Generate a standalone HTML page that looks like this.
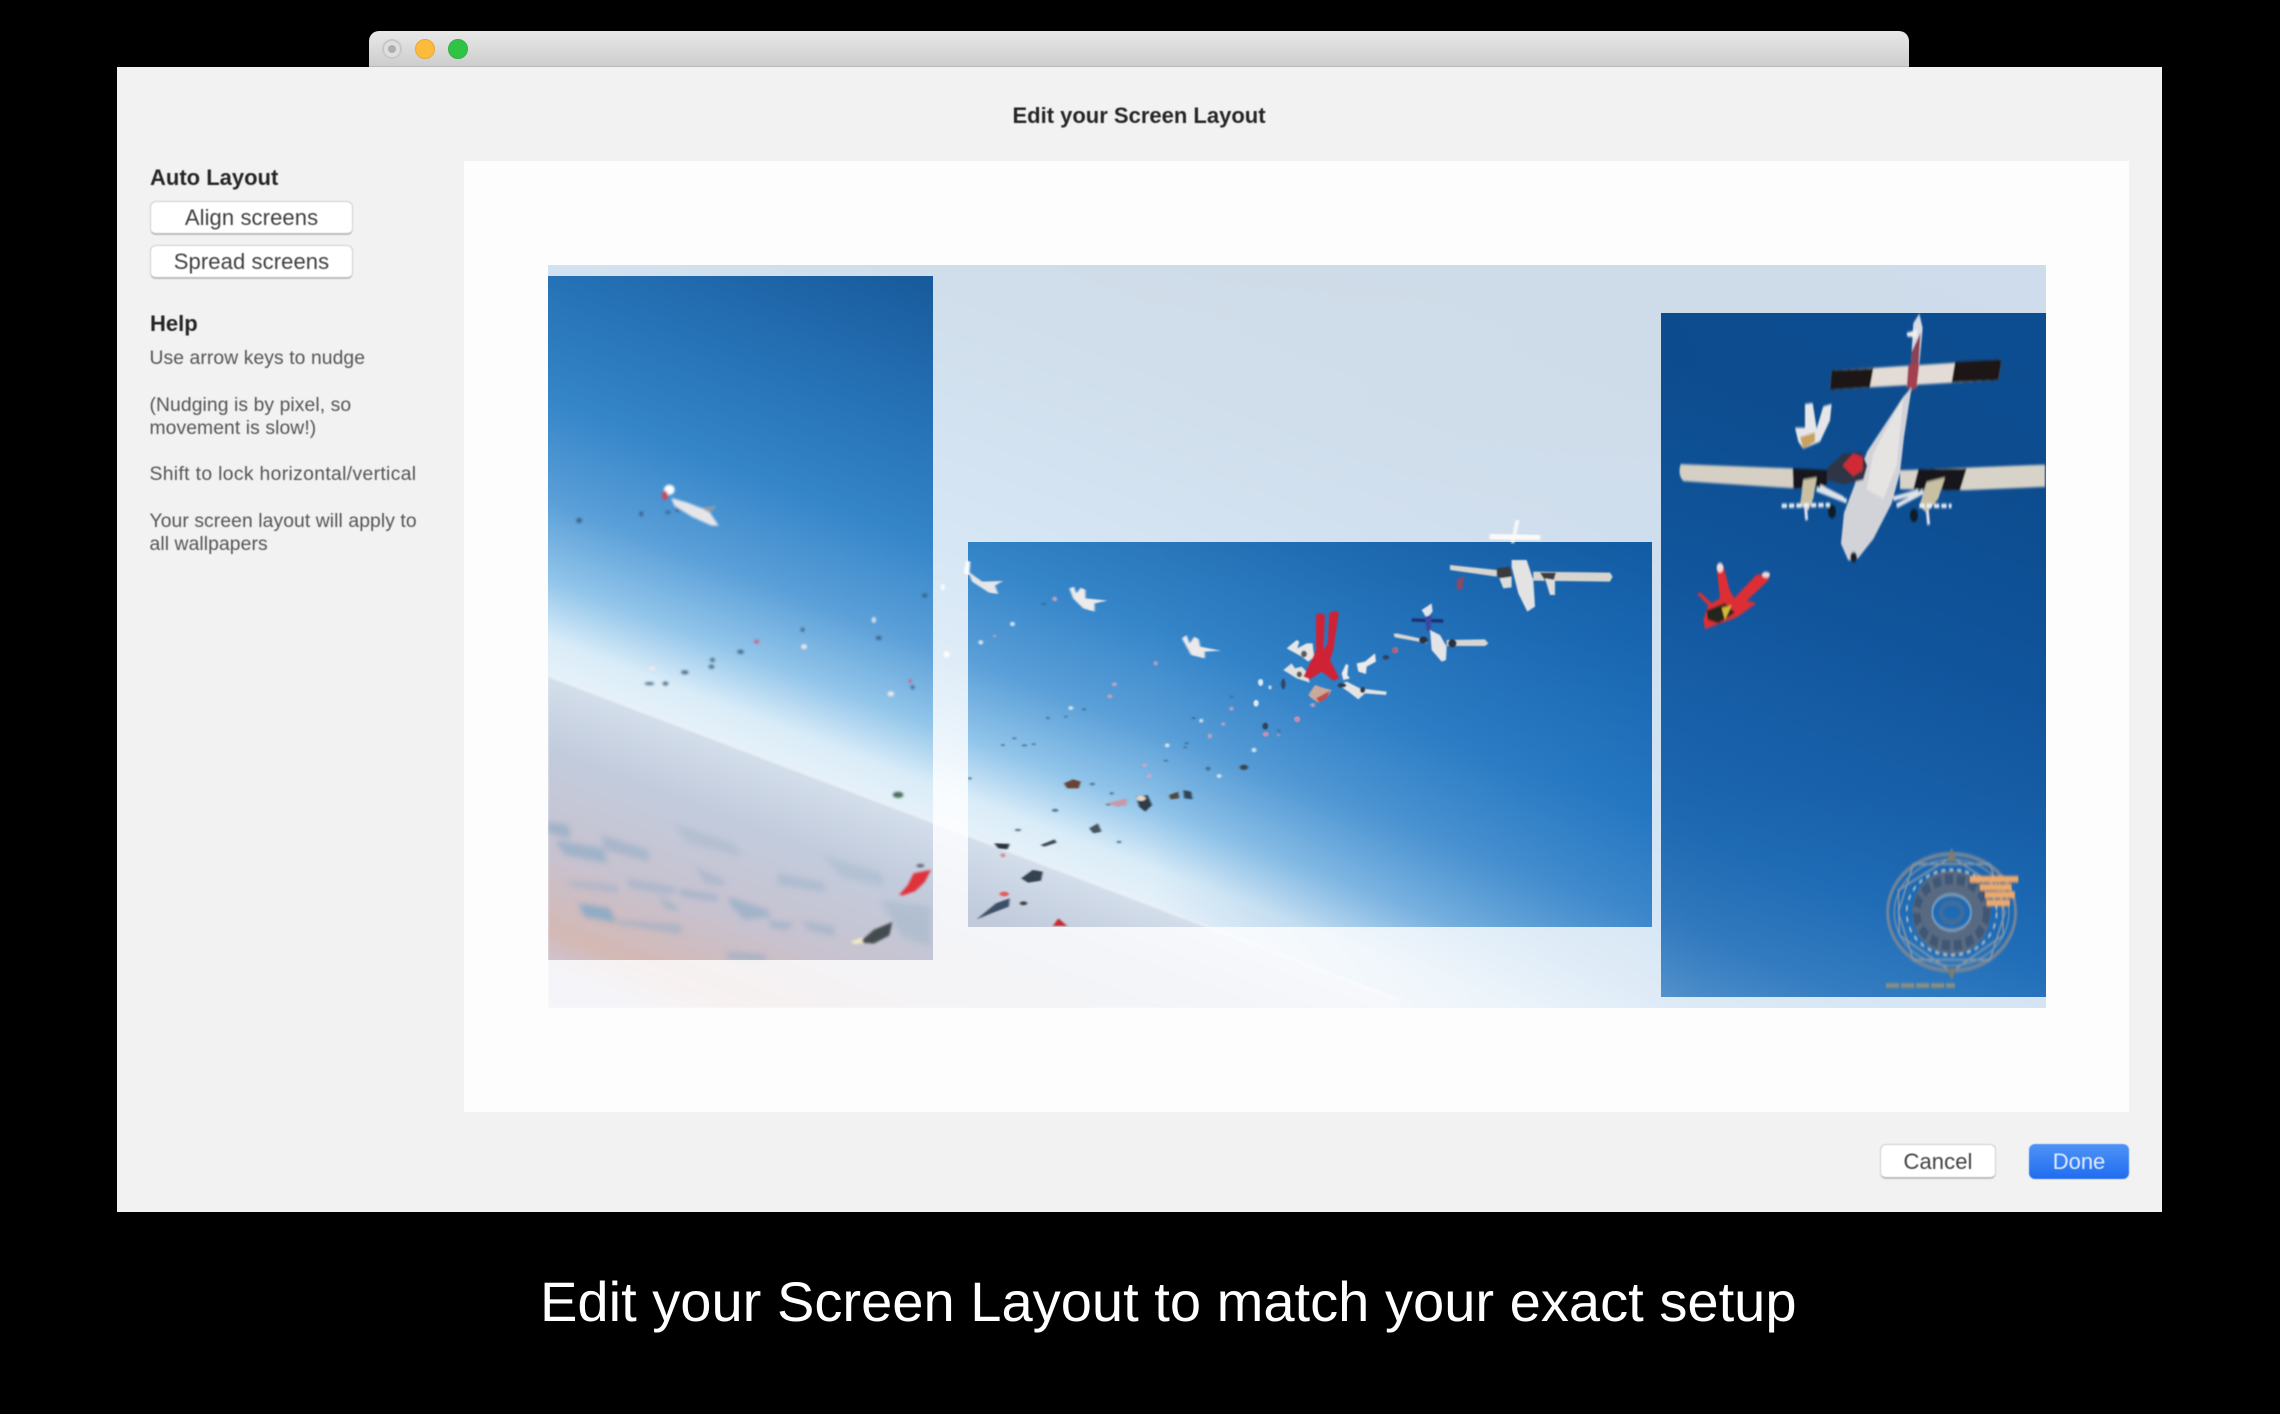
<!DOCTYPE html>
<html lang="en"><head><meta charset="utf-8"><title>Edit your Screen Layout</title>
<style>
html,body{margin:0;padding:0;background:#000;width:2280px;height:1414px;overflow:hidden}
body{position:relative;font-family:"Liberation Sans",Arial,sans-serif}
.a{position:absolute;white-space:nowrap}
.bar{left:369px;top:31px;width:1540px;height:37px;border-radius:10px 10px 0 0;background:linear-gradient(#e9e9e9,#cdcdcd);box-sizing:border-box;border-bottom:2px solid #b9b9b9}
.tl{width:20px;height:20px;border-radius:50%;top:39px;box-sizing:border-box}
.sheet{left:117px;top:67px;width:2045px;height:1145px;background:#f2f2f2}
.panel{left:464px;top:161px;width:1665px;height:951px;background:#fdfdfd}
.t{filter:blur(.45px)}
.b{font-weight:bold;color:#262626}
.h{font-size:19.3px;color:#555;left:149.5px;line-height:23px;letter-spacing:.1px}
.btn{box-sizing:border-box;height:34px;background:#fff;border:1px solid #cfcfcf;border-bottom:2px solid #bdbdbd;border-radius:6px;text-align:center;font-size:22px;line-height:32px;color:#404040;letter-spacing:.1px}
</style></head><body>
<div class="a bar"></div>
<div class="a tl" style="left:382px;background:#dedede;border:2px solid #c8c8c8"></div>
<div class="a" style="left:388px;top:45px;width:8px;height:8px;border-radius:50%;background:#aeaeae"></div>
<div class="a tl" style="left:415px;background:#fdbb3c;border:1px solid #e6a83a"></div>
<div class="a tl" style="left:448px;background:#2fc445;border:1px solid #35b04a"></div>

<div class="a sheet"></div>
<div class="a panel"></div>

<svg class="a" style="left:0;top:0;overflow:hidden" width="2280" height="1414" viewBox="0 0 2280 1414">
<defs>
<linearGradient id="sky" gradientUnits="userSpaceOnUse" x1="548" y1="676" x2="903" y2="-259">
<stop offset="0" stop-color="#e6f1f9"/>
<stop offset=".035" stop-color="#d9ecf8"/>
<stop offset=".09" stop-color="#92c5ea"/>
<stop offset=".165" stop-color="#5a9fd8"/>
<stop offset=".26" stop-color="#3585c9"/>
<stop offset=".37" stop-color="#2672b6"/>
<stop offset=".51" stop-color="#175a9b"/>
<stop offset=".7" stop-color="#0e477f"/>
<stop offset="1" stop-color="#0f4c8a"/>
</linearGradient>
<linearGradient id="ov" gradientUnits="userSpaceOnUse" x1="1150" y1="0" x2="1700" y2="0">
<stop offset="0" stop-color="#0b5fb5" stop-opacity="0"/>
<stop offset="1" stop-color="#0b5fb5" stop-opacity=".42"/>
</linearGradient>
<linearGradient id="ground" gradientUnits="userSpaceOnUse" x1="720" y1="735" x2="620" y2="1000">
<stop offset="0" stop-color="#d5e0ec"/>
<stop offset=".25" stop-color="#c2ccdd"/>
<stop offset=".6" stop-color="#c8c2cf"/>
<stop offset=".86" stop-color="#d4b8b4"/>
<stop offset="1" stop-color="#ccc8dc"/>
</linearGradient>
<linearGradient id="rdark" x1="0" y1="0" x2="0" y2="1">
<stop offset="0" stop-color="#0a2f66" stop-opacity=".15"/>
<stop offset=".7" stop-color="#0a3a7a" stop-opacity=".22"/>
<stop offset="1" stop-color="#0a3a7a" stop-opacity=".1"/>
</linearGradient>
<filter id="bl" x="-5%" y="-5%" width="110%" height="110%"><feGaussianBlur stdDeviation="2.6"/></filter>
<filter id="bl0" x="-5%" y="-5%" width="110%" height="110%"><feGaussianBlur stdDeviation="1"/></filter>
<filter id="bl2" x="-5%" y="-5%" width="110%" height="110%"><feGaussianBlur stdDeviation="9"/></filter>
<clipPath id="wp"><rect x="548" y="265" width="1498" height="743"/></clipPath>
</defs>
<g clip-path="url(#wp)">
<rect x="548" y="265" width="1498" height="743" fill="url(#sky)"/>
<rect x="1100" y="265" width="946" height="743" fill="url(#ov)"/>
<rect x="1661" y="313" width="385" height="684" fill="url(#rdark)"/>
<!-- ground -->
<path d="M548 676L1400 1000L1400 1008H548z" fill="url(#ground)" filter="url(#bl0)"/>
<path d="M548 676L1400 1000" stroke="#eef4f9" stroke-width="2" fill="none" opacity=".7" filter="url(#bl0)"/>
<!-- fields, zoom 8 coordinates -->
<g transform="translate(548,760) scale(.333,.333)" filter="url(#bl2)" fill="#8fabc4">
<path d="M0 185L60 195L70 235L0 220z" opacity=".7"/>
<path d="M20 240L165 265L180 310L50 285z" opacity=".7"/>
<path d="M160 225L300 270L305 305L170 270z" opacity=".55"/>
<path d="M90 430L185 445L205 488L110 470z"/>
<path d="M200 480L400 495L400 522L220 495z" opacity=".55"/>
<path d="M235 355L380 380L380 405L245 385z" opacity=".45"/>
<path d="M390 385L510 405L510 425L400 410z" opacity=".55"/>
<path d="M540 410L660 450L670 470L590 480L550 440z" opacity=".65"/>
<path d="M660 480L740 490L720 510L670 505z" opacity=".55"/>
<path d="M330 405L390 440L385 455L350 445z" opacity=".5"/>
<path d="M440 320L530 360L530 380L470 370z" opacity=".4"/>
<path d="M540 575L650 585L660 605L540 600z" opacity=".6"/>
<path d="M690 340L830 370L830 395L690 375z" opacity=".4"/>
<path d="M760 480L860 500L860 530L780 510z" opacity=".45"/>
<path d="M830 290L1000 340L1010 380L880 350z" opacity=".3"/>
<path d="M1000 420L1150 440L1150 560L1060 530z" opacity=".35"/>
<path d="M380 190L560 250L580 290L420 250z" opacity=".3"/>
<path d="M60 360L210 375L210 400L70 380z" opacity=".4"/>
</g>

<!-- left screen objects : zoom 3 coordinates -->
<g transform="translate(520,240) scale(.4847,.5128)">
<g filter="url(#bl)">
<path d="M312 503L345 512L372 522L405 519L392 532L410 557L395 557L355 540L318 518z" fill="#e6e6ea"/>
<path d="M372 522L405 519L392 532z" fill="#8e99a5"/>
<ellipse cx="308" cy="487" rx="11" ry="10" fill="#fff"/>
<ellipse cx="299" cy="498" rx="6" ry="9" fill="#d9434f"/>
<g fill="#33506c" opacity=".75">
<ellipse cx="122" cy="547" rx="6" ry="5"/><ellipse cx="250" cy="534" rx="4" ry="5"/><ellipse cx="305" cy="531" rx="5" ry="3"/><ellipse cx="325" cy="527" rx="5" ry="3"/>
<ellipse cx="397" cy="819" rx="5" ry="4"/><ellipse cx="395" cy="832" rx="6" ry="4"/><ellipse cx="340" cy="843" rx="8" ry="4"/><ellipse cx="267" cy="865" rx="10" ry="3"/><ellipse cx="300" cy="865" rx="6" ry="4"/><ellipse cx="455" cy="803" rx="7" ry="4"/><ellipse cx="583" cy="760" rx="4" ry="4"/><ellipse cx="740" cy="776" rx="6" ry="4"/><ellipse cx="835" cy="693" rx="5" ry="4"/><ellipse cx="810" cy="872" rx="4" ry="4"/>
</g>
<g fill="#f0e9ea"><ellipse cx="730" cy="741" rx="4" ry="6"/><ellipse cx="586" cy="793" rx="6" ry="5"/><ellipse cx="273" cy="835" rx="7" ry="4"/><ellipse cx="765" cy="885" rx="7" ry="5"/></g>
<g fill="#d75d80"><ellipse cx="488" cy="783" rx="5" ry="4"/><ellipse cx="805" cy="860" rx="3" ry="4"/></g>
<ellipse cx="780" cy="1082" rx="11" ry="6" fill="#4c6f5c"/>
<path d="M782 1277L800 1258L812 1235L848 1228L835 1252L815 1270L790 1278z" fill="#e0333a"/>
<ellipse cx="826" cy="1220" rx="8" ry="3" fill="#556"/>
<path d="M700 1370L730 1345L768 1330L762 1356L730 1372z" fill="#434b4e"/>
<path d="M682 1368L705 1360L708 1372L690 1373z" fill="#efe8c8"/>
<ellipse cx="872" cy="677" rx="4" ry="6" fill="#fff"/>
<ellipse cx="880" cy="808" rx="6" ry="6" fill="#fff"/>
</g>
</g>

<!-- middle screen objects : zoom 4 coordinates -->
<g transform="translate(950,520) scale(.4592,.3333)">
<g filter="url(#bl)">
<path d="M40 155L70 185L115 183L98 197L105 222L85 218L48 185z" fill="#e6e6e8"/>
<path d="M36 122L44 125L42 165L30 160z" fill="#fff"/>
<path d="M260 205L270 200L275 220L285 203L295 210L295 235L343 242L315 250L315 275L290 265L268 235z" fill="#eceaea"/>
<path d="M505 355L515 345L522 370L532 350L542 358L545 380L590 392L555 395L555 415L525 405z" fill="#ebe9e9"/>
<path d="M1232 0L1240 0L1228 70L1222 70z" fill="#f3efea"/>
<path d="M1175 42L1285 45L1285 60L1175 58z" fill="#ece7e0"/>
<g fill="#35526f" opacity=".7">
<ellipse cx="204" cy="252" rx="4" ry="3"/><ellipse cx="292" cy="568" rx="4" ry="3"/><ellipse cx="213" cy="594" rx="3" ry="4"/><ellipse cx="252" cy="590" rx="3" ry="3"/><ellipse cx="115" cy="675" rx="4" ry="3"/><ellipse cx="140" cy="655" rx="4" ry="3"/><ellipse cx="162" cy="676" rx="6" ry="3"/><ellipse cx="182" cy="672" rx="4" ry="3"/><ellipse cx="530" cy="594" rx="4" ry="3"/><ellipse cx="686" cy="620" rx="5" ry="8"/><ellipse cx="716" cy="632" rx="3" ry="3"/><ellipse cx="725" cy="492" rx="4" ry="7"/><ellipse cx="613" cy="530" rx="3" ry="3"/><ellipse cx="470" cy="722" rx="4" ry="3"/><ellipse cx="515" cy="670" rx="4" ry="3"/><ellipse cx="512" cy="682" rx="3" ry="3"/><ellipse cx="562" cy="746" rx="5" ry="6"/><ellipse cx="310" cy="792" rx="5" ry="4"/><ellipse cx="352" cy="820" rx="4" ry="4"/><ellipse cx="345" cy="853" rx="5" ry="4"/><ellipse cx="43" cy="775" rx="4" ry="4"/><ellipse cx="229" cy="871" rx="7" ry="5"/><ellipse cx="148" cy="930" rx="7" ry="4"/><ellipse cx="368" cy="966" rx="5" ry="4"/>
</g>
<ellipse cx="640" cy="742" rx="9" ry="8" fill="#394650"/>
<g fill="#e7a8bb" opacity=".8"><ellipse cx="228" cy="237" rx="5" ry="7"/><ellipse cx="97" cy="348" rx="3" ry="4"/><ellipse cx="358" cy="493" rx="5" ry="6"/><ellipse cx="348" cy="529" rx="5" ry="6"/><ellipse cx="448" cy="430" rx="4" ry="7"/><ellipse cx="566" cy="648" rx="4" ry="8"/><ellipse cx="613" cy="566" rx="4" ry="6"/><ellipse cx="595" cy="612" rx="4" ry="5"/><ellipse cx="424" cy="736" rx="5" ry="5"/><ellipse cx="434" cy="768" rx="5" ry="6"/><ellipse cx="755" cy="597" rx="5" ry="6"/><ellipse cx="687" cy="643" rx="5" ry="6"/><ellipse cx="715" cy="645" rx="3" ry="3"/><ellipse cx="970" cy="390" rx="4" ry="8"/><ellipse cx="790" cy="555" rx="5" ry="6"/></g>
<g fill="#eef1f2" opacity=".85"><ellipse cx="136" cy="312" rx="5" ry="7"/><ellipse cx="67" cy="367" rx="5" ry="7"/><ellipse cx="263" cy="564" rx="5" ry="6"/><ellipse cx="547" cy="602" rx="4" ry="6"/><ellipse cx="667" cy="549" rx="4" ry="8"/><ellipse cx="676" cy="485" rx="4" ry="8"/><ellipse cx="662" cy="690" rx="5" ry="7"/><ellipse cx="586" cy="768" rx="5" ry="6"/><ellipse cx="473" cy="676" rx="5" ry="6"/></g>
<path d="M248 790L268 778L285 785L280 805L255 805z" fill="#694334"/>
<path d="M405 830L430 825L440 855L425 875L412 860z" fill="#2f3a4a"/>
<ellipse cx="416" cy="835" rx="10" ry="8" fill="#e8d7c6"/>
<path d="M340 850L385 835L385 855L365 860z" fill="#c79aa9"/>
<path d="M477 825L497 815L499 835L480 838z" fill="#51473e"/>
<path d="M508 810L525 815L528 838L510 835z" fill="#2f4557"/>
<path d="M197 975L228 958L232 968L205 980z" fill="#3d4a56"/>
<path d="M96 970L130 972L125 988L105 985z" fill="#2b3540"/>
<path d="M303 925L322 910L330 935L312 940z" fill="#45535f"/>
<path d="M155 1075L180 1050L202 1055L198 1082L170 1088z" fill="#36424f"/>
<path d="M58 1198L100 1150L130 1135L128 1160L90 1180z" fill="#3d5066"/>
<ellipse cx="118" cy="1122" rx="10" ry="7" fill="#e55a5a"/>
<ellipse cx="160" cy="1150" rx="8" ry="6" fill="#444"/>
<ellipse cx="115" cy="1006" rx="5" ry="6" fill="#d28a93"/>
<path d="M224 1218L236 1195L255 1218z" fill="#c62c30"/>
</g>
</g>

<!-- central cluster and planes : zoom 7 coordinates -->
<g transform="translate(1240,560) scale(.3333)">
<g filter="url(#bl)">
<!-- white divers around the red one -->
<path d="M140 265L170 240L178 245L172 265L200 250L218 250L222 290L205 305L185 290z" fill="#e6e6e6"/>
<ellipse cx="192" cy="282" rx="9" ry="10" fill="#5c5a58"/>
<path d="M130 330L155 310L165 325L185 320L195 330L210 368L170 355z" fill="#e2e1e0"/>
<ellipse cx="178" cy="343" rx="8" ry="9" fill="#5a5a58"/>
<path d="M205 405L225 375L255 385L275 390L262 412L235 428L215 415z" fill="#c9a99c"/>
<path d="M228 415L270 392L262 412L238 428z" fill="#c94a45"/>
<path d="M295 375L320 365L360 385L440 395L438 405L375 400L355 418L325 395z" fill="#e4e4e4"/>
<ellipse cx="306" cy="376" rx="13" ry="7" fill="#2c3c56"/>
<ellipse cx="368" cy="390" rx="8" ry="9" fill="#33393f"/>
<path d="M305 340L318 312L325 315L322 345L330 355L310 360z" fill="#ececec"/>
<path d="M350 310L375 305L405 280L408 305L380 320L378 342L355 335z" fill="#ebebeb"/>
<!-- red -->
<path d="M228 165Q240 155 255 165L250 270L263 250L268 160Q285 148 296 158L280 270L270 300L298 355L280 362L245 335L210 358L190 350L210 310L228 270z" fill="#cf2035"/>
<!-- trailing dots -->
<ellipse cx="62" cy="368" rx="7" ry="10" fill="#dfe8f0"/><ellipse cx="130" cy="372" rx="6" ry="16" fill="#33455e"/><ellipse cx="48" cy="430" rx="7" ry="10" fill="#dfe8f0"/><ellipse cx="90" cy="382" rx="5" ry="6" fill="#c9d6e2"/><ellipse cx="172" cy="478" rx="8" ry="9" fill="#c88cb0"/><ellipse cx="76" cy="498" rx="8" ry="10" fill="#2f4260"/><ellipse cx="78" cy="522" rx="8" ry="6" fill="#c88cb0"/><ellipse cx="438" cy="292" rx="10" ry="7" fill="#2f4260"/><ellipse cx="464" cy="272" rx="8" ry="9" fill="#b65c74"/>
<!-- small plane -->
<path d="M545 150L575 130L578 155L560 175z" fill="#dfe3ea"/>
<path d="M515 175L610 178L610 188L515 185z" fill="#1c2d73"/>
<path d="M555 170L575 165L572 215L560 212z" fill="#3a47a2"/>
<path d="M460 222L470 220L540 235L560 240L560 250L535 245L465 232z" fill="#d6d5d3"/>
<path d="M620 240L735 238L745 250L735 258L620 258z" fill="#d8d6d3"/>
<path d="M570 210L600 225L620 260L618 300L605 305L575 270z" fill="#e4e4e8"/>
<ellipse cx="550" cy="240" rx="13" ry="10" fill="#27303e"/><ellipse cx="637" cy="250" rx="13" ry="12" fill="#27303e"/>
<!-- big plane -->
<path d="M630 15L770 30L770 50L630 30z" fill="#d8d5cf"/>
<path d="M880 35L1110 38L1118 50L1110 65L880 62z" fill="#d8d5cf"/>
<path d="M815 0L860 0L880 60L885 140L862 155L835 100L815 20z" fill="#e4e3e3"/>
<path d="M770 25L810 20L815 50L795 60L772 48z" fill="#3a3a3d"/>
<path d="M900 38L948 38L940 65L915 62z" fill="#3a3c3f"/>
<path d="M778 55L815 50L815 82L790 85z" fill="#dcdcdc"/>
<path d="M915 55L945 60L945 105L930 105z" fill="#dcdcdc"/>
<path d="M650 60L672 48L668 85L652 92z" fill="#8a4a66"/>
</g>
</g>

<!-- right screen objects : zoom 5 coordinates -->
<g transform="translate(1640,290) scale(.3333,.4744)">
<g filter="url(#bl)">
<path d="M820 70L838 50L848 80L832 205L808 215z" fill="#d8dde5"/>
<path d="M815 130L842 90L832 205L808 215z" fill="#8b4257"/>
<path d="M800 90L832 84L830 100L802 98z" fill="#f1f1f2"/>
<path d="M575 170L1085 147L1075 190L570 210z" fill="#e3dbd5"/>
<path d="M575 170L700 165L690 205L570 210z" fill="#1a1715"/>
<path d="M945 152L1085 147L1075 190L935 195z" fill="#1a1715"/>
<path d="M805 157L838 155L830 205L800 208z" fill="#a2404f"/>
<path d="M815 205L792 310L780 385L755 450L700 525L655 565L625 570L603 535L612 470L682 340L790 225z" fill="#d2d3d9"/>
<path d="M790 225L700 345L680 420L730 440L770 370z" fill="#e6e4e3"/>
<path d="M122 367L460 376L460 418L130 403Q112 390 122 367z" fill="#d5cfc4"/>
<path d="M458 376L565 380L560 412L530 415L460 418z" fill="#16171a"/>
<path d="M780 380L1215 368L1215 415L975 422L780 420z" fill="#d8d3c9"/>
<path d="M835 378L980 376L960 422L820 420z" fill="#16171a"/>
<path d="M530 420L620 445M610 440L540 415M770 455L850 425M760 440L835 425" stroke="#dfe3ea" stroke-width="10" fill="none"/>
<path d="M490 400L530 395L520 440L505 465L480 455z" fill="#c9c0a4"/>
<path d="M860 405L915 395L895 440L860 470L838 455z" fill="#c9c0a4"/>
<path d="M425 455L570 453" stroke="#eef2f5" stroke-width="9" stroke-dasharray="16 6" fill="none"/>
<path d="M838 455L935 455" stroke="#eef2f5" stroke-width="9" stroke-dasharray="16 6" fill="none"/>
<path d="M497 460L500 485M862 465L866 495" stroke="#dde" stroke-width="9"/>
<ellipse cx="576" cy="467" rx="12" ry="14" fill="#111a28"/>
<ellipse cx="822" cy="475" rx="12" ry="14" fill="#111a28"/>
<ellipse cx="641" cy="563" rx="10" ry="11" fill="#1b1f26"/>
<path d="M562 375L610 345L665 342L682 370L670 400L610 410L560 400z" fill="#2e3544"/>
<path d="M608 370L640 345L668 352L668 380L640 392z" fill="#cf2934"/>
<path d="M495 240L518 238L530 292L550 245L575 240L570 275L540 320L490 335L475 320L465 290L495 290z" fill="#e6e6e9"/>
<path d="M480 310L525 300L525 320L490 335z" fill="#c9a25e"/>
<path d="M230 585L250 580L268 630L282 650L350 600L390 598L385 612L320 655L350 660L290 690L232 705L195 715L190 695L205 665L170 640L182 638L215 660L240 650z" fill="#dd2f36"/>
<path d="M200 675L255 660L285 680L235 703L203 695z" fill="#23261f"/>
<path d="M245 670L275 665L255 695z" fill="#d6b936"/>
<ellipse cx="240" cy="585" rx="10" ry="10" fill="#f3dcdc"/>
<ellipse cx="378" cy="600" rx="12" ry="6" fill="#f3dcdc"/>
<g fill="none" stroke="#8e9aa6">
<ellipse cx="935" cy="1312" rx="192" ry="123" stroke-width="9" stroke="#72849a"/>
<ellipse cx="935" cy="1312" rx="172" ry="112" stroke-width="3"/>
<path d="M935 1195L1085 1265L1090 1360L935 1437L778 1360L775 1265z" stroke-width="4"/>
<path d="M820 1210L1050 1210L1095 1312L1050 1412L820 1412L775 1312z" stroke-width="4"/>
<ellipse cx="935" cy="1312" rx="90" ry="60" stroke-width="55" stroke="#596b82"/>
<ellipse cx="935" cy="1312" rx="105" ry="70" stroke-width="22" stroke="#3f5774" stroke-dasharray="24 12"/>
<ellipse cx="935" cy="1312" rx="135" ry="90" stroke-width="5" stroke-dasharray="12 12" stroke="#c3c4c1"/>
<ellipse cx="935" cy="1312" rx="58" ry="38" stroke-width="5" stroke="#7da2c4"/>
<ellipse cx="935" cy="1312" rx="32" ry="20" stroke-width="12" stroke="#3f6d9c"/>
<path d="M935 1175L920 1205H950zM935 1455L920 1430H950z" fill="#7c7c70" stroke="none"/>
<path d="M738 1466H945" stroke="#8a8f7f" stroke-width="10" stroke-dasharray="40 5"/>
</g>
<g fill="#eea869">
<rect x="990" y="1235" width="145" height="14"/>
<rect x="1020" y="1252" width="95" height="14"/>
<rect x="1035" y="1268" width="90" height="14"/>
<rect x="1040" y="1285" width="70" height="14"/>
</g>
</g>
</g>

<!-- white wash outside the screens -->
<path fill="#fff" fill-opacity=".8" fill-rule="evenodd" d="M548 265H2046V1008H548zM548 276V960H933V276zM968 542V927H1652V542zM1661 313V997H2046V313z"/>
</g>
</svg>

<div class="a t b" style="left:1000px;top:103px;font-size:22px;line-height:26px;width:278px;text-align:center">Edit your Screen Layout</div>
<div class="a t b" style="left:150px;top:165px;font-size:22px;line-height:26px">Auto Layout</div>
<div class="a t btn" style="left:150px;top:201px;width:203px">Align screens</div>
<div class="a t btn" style="left:150px;top:245px;width:203px">Spread screens</div>
<div class="a t b" style="left:150px;top:311px;font-size:22px;line-height:26px">Help</div>
<div class="a t h" style="top:347px">Use arrow keys to nudge</div>
<div class="a t h" style="top:394px">(Nudging is by pixel, so<br>movement is slow!)</div>
<div class="a t h" style="top:463px;letter-spacing:.36px">Shift to lock horizontal/vertical</div>
<div class="a t h" style="top:510px">Your screen layout will apply to<br>all wallpapers</div>
<div class="a t btn" style="left:1880px;top:1144px;width:116px;height:35px;line-height:33px">Cancel</div>
<div class="a t" style="left:2029px;top:1144px;width:100px;height:35px;border-radius:6px;background:linear-gradient(#4f93f6,#1f6cf0);color:#e4eefc;font-size:22px;line-height:36px;text-align:center">Done</div>
<div class="a" style="left:540px;top:1271px;font-size:56.1px;line-height:62px;color:#fff">Edit your Screen Layout to match your exact setup</div>
</body></html>
